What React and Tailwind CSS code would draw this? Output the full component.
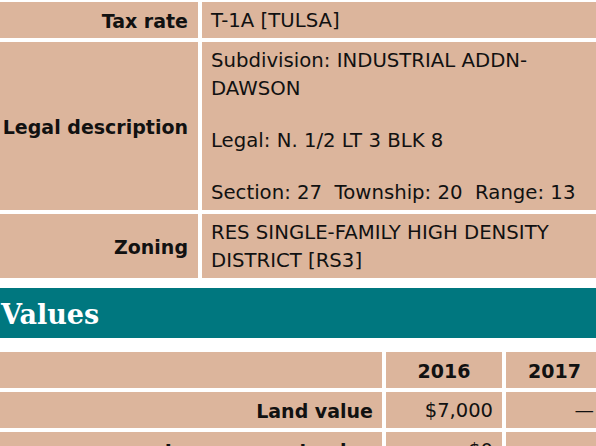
const cell = "bg-[#dcb59c] text-[#111] pt-[5px] pb-[3px]";

function InfoRow({ label, children }) {
  return (
    <>
      <div className={`${cell} pr-[10px] flex items-center justify-end font-bold text-[19px]`}>
        {label}
      </div>
      <div className={`${cell} pl-[9px] pr-2 text-[19.7px]`}>{children}</div>
    </>
  );
}

export default function App() {
  const years = ["2016", "2017", "2018"];
  const rows = [
    { label: "Land value", values: ["$7,000", "—", "—"] },
    { label: "Improvement value", values: ["$0", "—", "—"] },
  ];

  return (
    <div className="w-[596px] h-[446px] overflow-hidden bg-white leading-[28px]" style={{ fontFamily: '"DejaVu Sans", Verdana, sans-serif' }}>
      <div className="pt-[2px] grid grid-cols-[198px_1fr] gap-[4px]">
        <InfoRow label="Tax rate">T-1A [TULSA]</InfoRow>
        <InfoRow label="Legal description">
          <p>Subdivision: INDUSTRIAL ADDN-DAWSON</p>
          <p className="mt-[24px]">Legal: N. 1/2 LT 3 BLK 8</p>
          <p className="mt-[24px] whitespace-pre">Section: 27  Township: 20  Range: 13</p>
        </InfoRow>
        <InfoRow label="Zoning">RES SINGLE-FAMILY HIGH DENSITY DISTRICT [RS3]</InfoRow>
      </div>

      <h2
        className="mt-[10px] h-[50px] bg-[#00777f] text-white font-bold text-[27px] flex items-center pl-[1px] pt-[4px]"
        style={{ fontFamily: '"DejaVu Serif", Georgia, serif' }}
      >
        Values
      </h2>

      <div className="mt-[14px] w-[720px] grid grid-cols-[382px_116px_97px_105px] gap-[4px]">
        <div className={cell}>&nbsp;</div>
        {years.map((y) => (
          <div key={y} className={`${cell} text-center font-bold text-[19px]`}>
            {y}
          </div>
        ))}
        {rows.map((r) => (
          <div key={r.label} className="contents">
            <div className={`${cell} pr-[9px] text-right font-bold text-[19px]`}>{r.label}</div>
            {r.values.map((v, i) => (
              <div key={i} className={`${cell} pr-[9px] text-right text-[19.5px]`}>
                {v}
              </div>
            ))}
          </div>
        ))}
      </div>
    </div>
  );
}
